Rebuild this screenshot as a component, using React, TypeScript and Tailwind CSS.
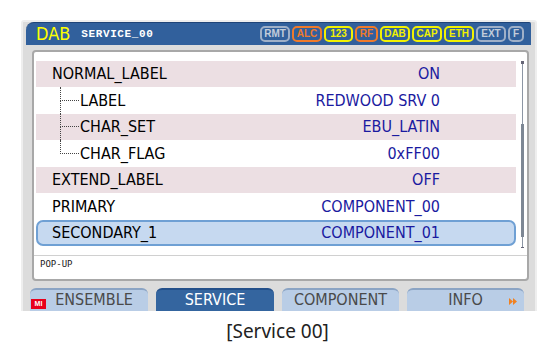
const NARROW = "font-['DejaVu_Sans_Condensed','Liberation_Sans',sans-serif]";

type Row = {
  label: string;
  value: string;
  pink?: boolean;
  child?: boolean;
  last?: boolean;
  selected?: boolean;
};

const rows: Row[] = [
  { label: "NORMAL_LABEL", value: "ON", pink: true },
  { label: "LABEL", value: "REDWOOD SRV 0", child: true },
  { label: "CHAR_SET", value: "EBU_LATIN", pink: true, child: true },
  { label: "CHAR_FLAG", value: "0xFF00", child: true, last: true },
  { label: "EXTEND_LABEL", value: "OFF", pink: true },
  { label: "PRIMARY", value: "COMPONENT_00" },
  { label: "SECONDARY_1", value: "COMPONENT_01", selected: true },
];

const badges = [
  { t: "RMT", w: "w-[30px]", c: "border-[#9fb0c8] text-[#c3cddb]" },
  { t: "ALC", w: "w-[30px]", c: "border-[#f07a2a] text-[#f07a2a]" },
  { t: "123", w: "w-[29px]", c: "border-[#f2f200] text-[#f2f200]" },
  { t: "RF", w: "w-[23px]", c: "border-[#f07a2a] text-[#f07a2a]" },
  { t: "DAB", w: "w-[30px]", c: "border-[#f2f200] text-[#f2f200]" },
  { t: "CAP", w: "w-[30px]", c: "border-[#f2f200] text-[#f2f200]" },
  { t: "ETH", w: "w-[30px]", c: "border-[#f2f200] text-[#f2f200]" },
  { t: "EXT", w: "w-[30px]", c: "border-[#9fb0c8] text-[#c3cddb]" },
  { t: "F", w: "w-[16px]", c: "border-[#9fb0c8] text-[#c3cddb]" },
];

function Tree({ last }: { last?: boolean }) {
  return (
    <div className="flex flex-col w-[19px] h-full ml-[8px]">
      <div className="h-1/2 border-l border-b border-dotted border-[#444]" />
      <div className={"h-1/2 " + (last ? "" : "border-l border-dotted border-[#444]")} />
    </div>
  );
}

function ListRow({ r }: { r: Row }) {
  let bg = "";
  if (r.pink) bg = "bg-[#ecdfe3]";
  if (r.selected) bg = "bg-[#c6d9f0] border-2 border-[#6fa0d4] rounded-[7px]";
  return (
    <div className={`flex items-center h-[26.5px] ${bg} ${NARROW} text-[16px] leading-none`}>
      <div className={`flex items-center h-full flex-1 ${r.selected ? "pl-[14px]" : "pl-[16px]"}`}>
        {r.child && <Tree last={r.last} />}
        <span className={`text-black ${r.child ? "ml-[1px]" : ""}`}>{r.label}</span>
      </div>
      <span className={`text-[#1a1aa0] ${r.selected ? "pr-[74px]" : "pr-[76px]"}`}>{r.value}</span>
    </div>
  );
}

const tabs = [
  { t: "ENSEMBLE", w: "w-[118px]", active: false, mi: true },
  { t: "SERVICE", w: "w-[118px]", active: true },
  { t: "COMPONENT", w: "w-[117px]", active: false },
  { t: "INFO", w: "w-[117px]", active: false, more: true },
];

export default function App() {
  return (
    <div className="w-[555px] h-[355px] bg-white overflow-hidden">
      <div className="ml-[21px] mt-[20px] w-[516px] h-[291px] bg-[#dcdcdc] border-l-2 border-r-2 border-t-2 border-[#eeeeee] rounded-t-[3px] overflow-hidden flex flex-col">
        {/* title bar */}
        <div className="ml-[3px] w-[505px] h-[23px] bg-[#31609c] border-t border-[#1f4478] rounded-tl-[8px] rounded-tr-[2px] flex items-center pl-[10px] pr-[7px]">
          <span className={`${NARROW} text-[18px] leading-none text-[#ffff00]`}>DAB</span>
          <span className="ml-[11px] font-['Liberation_Mono',monospace] font-bold text-[11px] tracking-[0.6px] text-white">SERVICE_00</span>
          <div className="ml-auto flex gap-[2px]">
            {badges.map((b) => (
              <span
                key={b.t}
                className={`${b.w} h-[16px] border-2 rounded-[5px] flex items-center justify-center font-['Liberation_Sans',sans-serif] font-bold text-[10px] leading-none ${b.c}`}
              >
                {b.t}
              </span>
            ))}
          </div>
        </div>

        {/* content panel */}
        <div className="ml-[9px] mt-[5px] w-[497px] h-[233px] bg-white border-2 border-[#a8a8a8] rounded-[4px] flex flex-col">
          <div className="h-[203px] flex pl-[2px] pt-[9px]">
            <div className="w-[480px] flex flex-col">
              {rows.map((r) => (
                <ListRow key={r.label} r={r} />
              ))}
            </div>
            <div className="ml-[5px] w-[3px] flex flex-col items-center">
              <div className="w-[3px] h-[3px] bg-[#667]" />
              <div className="w-px h-[60px] bg-[#8c96a4]" />
              <div className="w-[3px] h-[113px] bg-[#7d8794]" />
              <div className="w-px h-[10px] bg-[#8c96a4]" />
              <div className="w-[3px] h-px bg-[#667]" />
            </div>
          </div>
          <div className="border-t border-[#d0d0d0] pl-[6px] pt-[4px] font-['DejaVu_Sans_Mono',monospace] text-[9px] leading-none text-[#222]">
            POP-UP
          </div>
        </div>

        {/* tabs */}
        <div className="ml-[7px] mt-[7px] flex gap-[8px] h-[23px]">
          {tabs.map((t) => (
            <div
              key={t.t}
              className={`${t.w} h-full rounded-t-[6px] border-t-2 flex items-start pt-[2px] justify-center relative ${NARROW} text-[16px] leading-none ${
                t.active ? "bg-[#34659f] border-[#24508a] text-white" : "bg-[#b9cde6] border-[#8ba4c4] text-[#4a4a4a]"
              }`}
            >
              {t.mi && (
                <span className="absolute left-[1px] top-[9px] w-[15px] h-[10px] bg-[#e8001c] text-white text-[7px] font-bold font-['Liberation_Sans',sans-serif] leading-[10px] text-center">
                  MI
                </span>
              )}
              <span className={t.mi ? "ml-[10px]" : ""}>{t.t}</span>
              {t.more && (
                <svg className="absolute right-[7px] top-[8px]" width="8" height="7" viewBox="0 0 8 7">
                  <path d="M0 0 L4 3.5 L0 7 Z M4 0 L8 3.5 L4 7 Z" fill="#f08020" />
                </svg>
              )}
            </div>
          ))}
        </div>
      </div>

      <div className="mt-[11px] text-center font-['Noto_Sans',sans-serif] text-[19px] leading-none text-[#222]">
        [Service 00]
      </div>
    </div>
  );
}
